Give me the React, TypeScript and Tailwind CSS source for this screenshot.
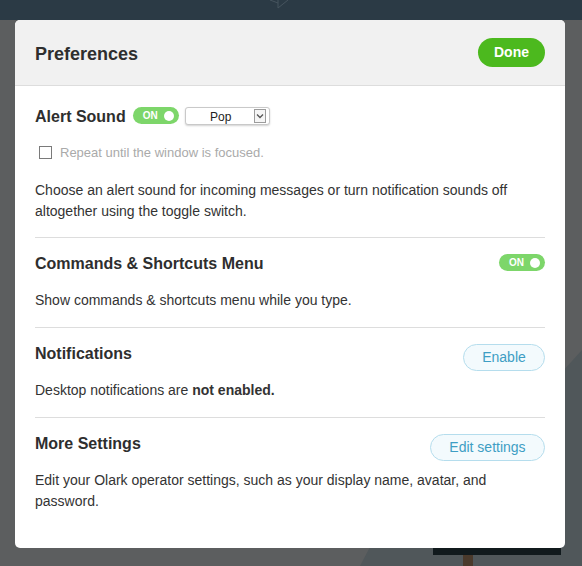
import React from "react";

const font = { fontFamily: '"Liberation Sans", Arial, sans-serif' };

function Toggle() {
  return (
    <div className="mt-px flex h-[17px] w-[46px] shrink-0 items-center justify-between rounded-full bg-[#7dd66a] pl-[10px] pr-[5px]">
      <span className="text-[10px] font-bold leading-none text-white">ON</span>
      <span className="h-[10px] w-[10px] rounded-full bg-white" />
    </div>
  );
}

function PillButton({ label, width }: { label: string; width: string }) {
  return (
    <button
      className={`mt-px h-[27px] ${width} shrink-0 rounded-full border border-[#b5dded] bg-[#f3fafd] text-[14px] text-[#3e9ec4]`}
    >
      {label}
    </button>
  );
}

export default function App() {
  return (
    <div className="relative h-screen overflow-hidden bg-[#5c5e5f]" style={font}>
      {/* backdrop */}
      <svg className="absolute inset-0" width="582" height="566" viewBox="0 0 582 566">
        <polygon points="600,330 562,372 370,547 360,566 600,566" fill="#50575a" />
      </svg>

      <div className="relative">
        {/* top bar */}
        <div className="relative h-5 bg-[#2b3a45]">
          <svg className="absolute left-[268px] top-0" width="22" height="9" viewBox="0 0 22 9">
            <path d="M2 0 L10 3 M10 0 L10 8 L20 0" stroke="#46545e" strokeWidth="1" fill="none" />
          </svg>
        </div>

        {/* modal */}
        <div className="ml-[15px] w-[550px] overflow-hidden rounded-[5px] bg-white text-[#333]">
          <div className="flex h-[66px] items-center justify-between border-b border-[#dddddd] bg-[#f1f1f1] px-5">
            <h1 className="pt-[3px] text-[18px] font-bold text-[#2e2e2e]">Preferences</h1>
            <button className="h-[29px] w-[67px] rounded-full bg-[#4cb91e] text-[14px] font-bold text-white">
              Done
            </button>
          </div>

          <div className="px-5 pb-9">
            {/* Alert sound */}
            <div className="border-b border-[#dddddd] pb-[15px] pt-5">
              <div className="flex h-5 items-start">
                <h2 className="pt-px text-[16px] font-bold leading-5 text-[#2e2e2e]">Alert Sound</h2>
                <div className="ml-[7px]">
                  <Toggle />
                </div>
                <div className="ml-[6px] mt-px flex h-[18px] w-[85px] items-center rounded-[3px] border border-[#c9c9c9] bg-white shadow-[0_1px_2px_rgba(0,0,0,0.18)]">
                  <span className="flex-1 pl-[2px] pt-px text-center text-[12px] leading-none text-[#222]">Pop</span>
                  <span className="mr-[3px] flex h-[14px] w-[12px] items-center justify-center border border-[#9c9c9c] bg-[#f5f5f5]">
                    <svg width="8" height="6" viewBox="0 0 8 6">
                      <path d="M1 1.5 L4 4.5 L7 1.5" stroke="#555" strokeWidth="1.3" fill="none" />
                    </svg>
                  </span>
                </div>
              </div>
              <label className="mt-[18px] flex h-4 items-center pl-1">
                <span className="h-[13px] w-[13px] border border-[#7a7a7a] bg-white" />
                <span className="ml-[8px] pt-px text-[13px] leading-4 text-[#aaaaaa]">
                  Repeat until the window is focused.
                </span>
              </label>
              <p className="mt-5 text-[14px] leading-[21px]">
                Choose an alert sound for incoming messages or turn notification sounds off altogether
                using the toggle switch.
              </p>
            </div>

            {/* Commands */}
            <div className="border-b border-[#dddddd] pb-4 pt-[15px]">
              <div className="flex h-5 items-start justify-between">
                <h2 className="pt-px text-[16px] font-bold leading-5 text-[#2e2e2e]">Commands &amp; Shortcuts Menu</h2>
                <Toggle />
              </div>
              <p className="mt-[17px] text-[14px] leading-[21px]">Show commands &amp; shortcuts menu while you type.</p>
            </div>

            {/* Notifications */}
            <div className="border-b border-[#dddddd] pb-4 pt-[15px]">
              <div className="flex h-5 items-start justify-between">
                <h2 className="pt-px text-[16px] font-bold leading-5 text-[#2e2e2e]">Notifications</h2>
                <PillButton label="Enable" width="w-[82px]" />
              </div>
              <p className="mt-[17px] text-[14px] leading-[21px]">
                Desktop notifications are <b>not enabled.</b>
              </p>
            </div>

            {/* More settings */}
            <div className="pt-[15px]">
              <div className="flex h-5 items-start justify-between">
                <h2 className="pt-px text-[16px] font-bold leading-5 text-[#2e2e2e]">More Settings</h2>
                <PillButton label="Edit settings" width="w-[115px]" />
              </div>
              <p className="mt-[17px] text-[14px] leading-[21px]">
                Edit your Olark operator settings, such as your display name, avatar, and password.
              </p>
            </div>
          </div>
        </div>

        {/* stand below the modal */}
        <div className="ml-[433px] h-[7px] w-[128px] bg-[#111a1d]" />
        <div className="ml-[463px] h-[12px] w-[10px] bg-[#4a3a2c]" />
      </div>
    </div>
  );
}
